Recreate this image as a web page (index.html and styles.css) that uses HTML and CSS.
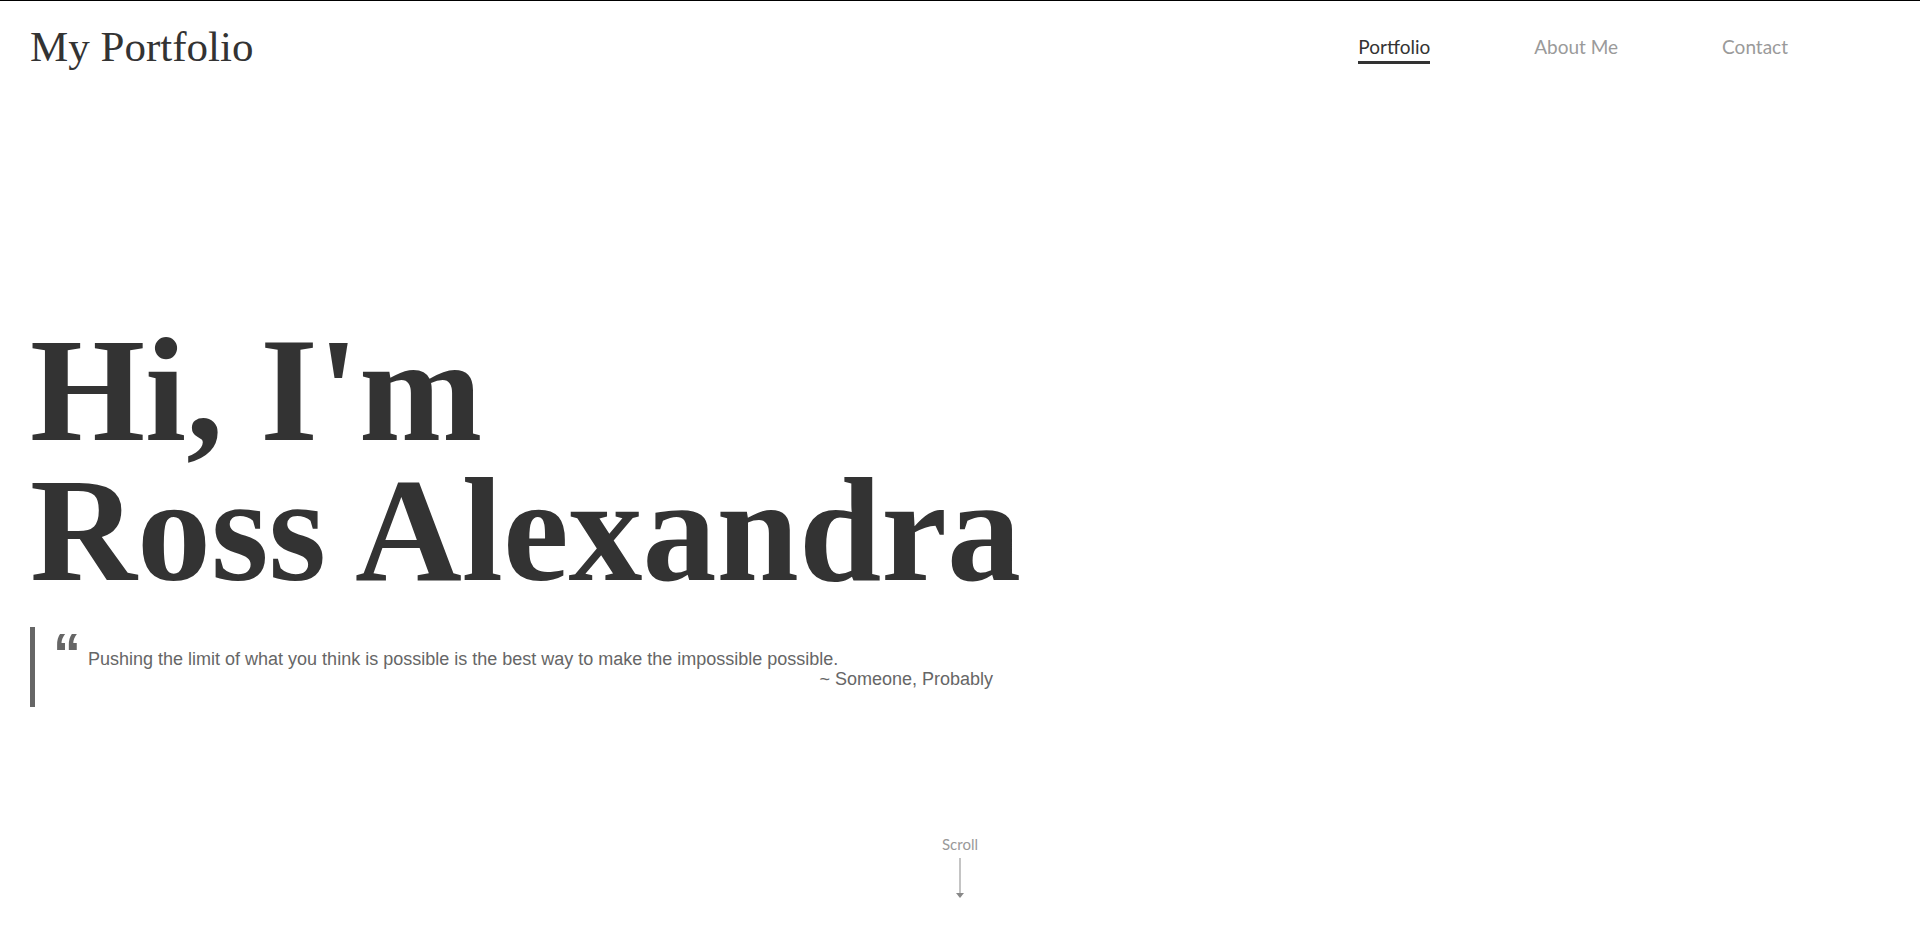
FILE: index.html
```html
<!DOCTYPE html>
<html lang="en">
<head>
<meta charset="utf-8">
<title>My Portfolio</title>
<link rel="stylesheet" href="styles.css">
</head>
<body>
  <header class="site-header">
    <div class="logo">My Portfolio</div>
    <nav class="nav">
      <a class="nav-link active" href="#">Portfolio</a>
      <a class="nav-link" href="#">About Me</a>
      <a class="nav-link" href="#">Contact</a>
    </nav>
  </header>
  <main class="hero">
    <h1 class="hero-title">Hi, I'm<br>Ross Alexandra</h1>
    <blockquote class="quote">
      <span class="quote-mark">&ldquo;</span>
      <div class="quote-body">
        <p class="quote-text">Pushing the limit of what you think is possible is the best way to make the impossible possible.</p>
        <p class="quote-author">~ Someone, Probably</p>
      </div>
    </blockquote>
  </main>
  <div class="scroll">
    <span class="scroll-label">Scroll</span>
    <span class="scroll-line"></span>
    <span class="scroll-head"></span>
  </div>
</body>
</html>
```

FILE: styles.css
```css
html, body {
  margin: 0;
  padding: 0;
  background: #fff;
}

body {
  border-top: 1px solid #000;
  height: 927px;
  overflow: hidden;
  color: #333;
  font-family: "Liberation Serif", "Times New Roman", serif;
}

.site-header {
  display: flex;
  justify-content: space-between;
  align-items: flex-start;
  padding: 21px 132px 0 30px;
}

.logo {
  font-family: "Liberation Serif", "Times New Roman", serif;
  font-size: 43px;
  line-height: 50px;
  color: #333;
}

.nav {
  display: flex;
  gap: 104px;
  margin-top: 13px;
}

.nav-link {
  font-family: Lato, "Open Sans", sans-serif;
  font-size: 19px;
  line-height: 23px;
  color: #9a9a9a;
  text-decoration: none;
  padding-bottom: 3px;
  border-bottom: 3px solid transparent;
}

.nav-link.active {
  color: #333;
  border-bottom-color: #333;
}

.hero {
  padding: 0 30px;
  margin-top: 248px;
}

.hero-title {
  margin: 0;
  font-family: "Liberation Serif", "Times New Roman", serif;
  font-weight: bold;
  font-size: 148px;
  line-height: 140px;
  color: #333;
}

.quote {
  display: flex;
  align-items: flex-start;
  margin: 27px 0 0;
  height: 80px;
  box-sizing: border-box;
  border-left: 5px solid #666;
  padding-left: 18px;
}

.quote-mark {
  font-family: "Liberation Sans", Arial, sans-serif;
  font-weight: bold;
  font-size: 56px;
  line-height: 52px;
  color: #666;
  width: 35px;
}

.quote-body {
  width: 905px;
  padding-top: 22px;
  font-family: "Liberation Sans", Arial, sans-serif;
  font-size: 18px;
  line-height: 20px;
  color: #666;
}

.quote-text,
.quote-author {
  margin: 0;
}

.quote-author {
  text-align: right;
}

.scroll {
  display: flex;
  flex-direction: column;
  align-items: center;
  margin-top: 128px;
}

.scroll-label {
  font-family: Lato, "Open Sans", sans-serif;
  font-size: 15px;
  line-height: 18px;
  color: #999;
}

.scroll-line {
  display: block;
  width: 2px;
  height: 35px;
  margin-top: 5px;
  background: #c4c4c4;
}

.scroll-head {
  display: block;
  width: 0;
  height: 0;
  border-left: 4px solid transparent;
  border-right: 4px solid transparent;
  border-top: 5px solid #888;
}
```
